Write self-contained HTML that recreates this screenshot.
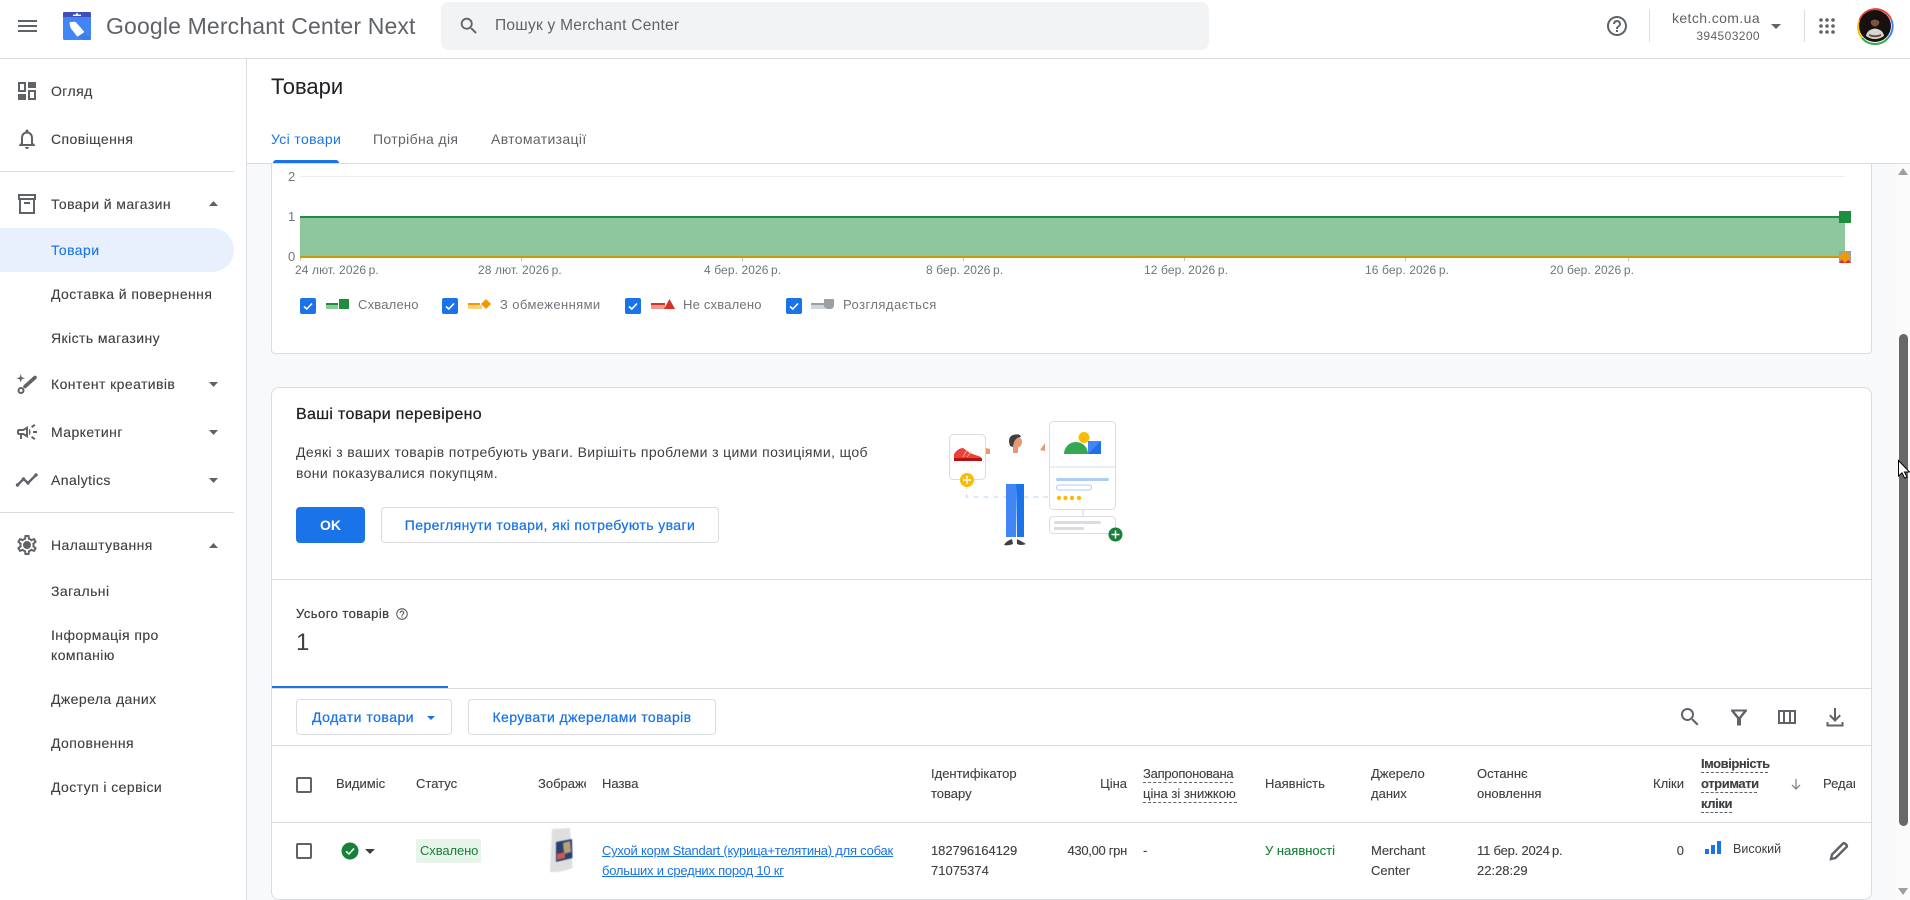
<!DOCTYPE html>
<html lang="uk"><head><meta charset="utf-8"><title>Google Merchant Center Next</title>
<style>
html,body{margin:0;padding:0;width:1910px;height:900px;overflow:hidden;background:#fff}
body{font-family:"Liberation Sans",Arial,sans-serif;font-size:14px;color:#3c4043;position:relative}
.t{position:absolute;white-space:nowrap;line-height:20px;height:20px}
.b{position:absolute;box-sizing:border-box}
.m{font-weight:400;-webkit-text-stroke:.25px currentColor}
.nav{color:#3c4043;left:51px;font-size:14px;letter-spacing:.42px;-webkit-text-stroke:.12px currentColor}
.th{font-size:13px;color:#3c4043;-webkit-text-stroke:.12px currentColor}
.ax{font-size:12px;color:#70757a;top:260px;letter-spacing:.1px}
.yl{font-size:13px;color:#70757a}
.lg{font-size:13px;color:#70757a;top:295px;letter-spacing:.3px}
.blue{color:#1a73e8}
.btn{position:absolute;box-sizing:border-box;border:1px solid #dadce0;border-radius:4px;background:#fff;color:#1a73e8;text-align:center;font-size:14px;white-space:nowrap;letter-spacing:.4px}
.dash{border-bottom:1px dashed #5f6368;position:absolute;height:0}
svg{position:absolute;overflow:visible}
.cb{position:absolute;width:16px;height:16px;box-sizing:border-box;border:2px solid #5f6368;border-radius:2px}
.lc{position:absolute;width:16px;height:16px;background:#1a73e8;border-radius:2px;top:298px}
</style></head><body>

<!-- content background -->
<div class="b" style="left:247px;top:163px;width:1663px;height:737px;background:#f8f9fa"></div>
<div class="b" style="left:1896px;top:163px;width:14px;height:737px;background:#fbfbfb"></div>

<!-- Top header -->
<div class="b" style="left:0;top:58px;width:1910px;height:1px;background:#dadce0"></div>
<div class="b" style="left:18px;top:20px;width:19px;height:2px;background:#5f6368"></div>
<div class="b" style="left:18px;top:25px;width:19px;height:2px;background:#5f6368"></div>
<div class="b" style="left:18px;top:30px;width:19px;height:2px;background:#5f6368"></div>
<svg style="left:63px;top:12px" width="28" height="28" viewBox="0 0 28 28">
<rect width="28" height="28" rx="1.500" fill="#4285f4"/>
<path d="M0 1.500A1.500 1.500 0 0 1 1.500 0H26.500A1.500 1.500 0 0 1 28 1.500V5H0Z" fill="#3f51b5"/>
<rect x="10" y="2.600" width="8" height="1.400" fill="#fff"/><rect x="13" y="1.200" width="2" height="2" fill="#fff"/>
<path d="M21 20L28 26V26.500Q28 28 26.500 28H20L14 24Z" fill="#3d7ee6"/>
<path d="M6.500 11.500Q6.300 10.300 7.800 10L12.500 9.800L21 19.500Q21.300 20.300 20.500 20.800L15.200 24.300Q14.400 24.800 13.800 24L7.600 16Z" fill="#fff"/>
</svg>
<div class="t" style="left:106px;top:14px;font-size:23px;line-height:24px;height:24px;color:#5f6368;letter-spacing:.15px">Google Merchant Center Next</div>
<div class="b" style="left:441px;top:2px;width:768px;height:48px;background:#f1f3f4;border-radius:8px"></div>
<svg style="left:458px;top:15px" width="22" height="22" viewBox="0 0 24 24"><path fill="#5f6368" d="M15.5 14h-.79l-.28-.27A6.47 6.47 0 0 0 16 9.5 6.5 6.5 0 1 0 9.5 16c1.61 0 3.09-.59 4.23-1.57l.27.28v.79l5 4.99L20.49 19l-4.99-5zm-6 0C7.01 14 5 11.99 5 9.5S7.01 5 9.5 5 14 7.01 14 9.5 11.99 14 9.5 14z"/></svg>
<div class="t" style="left:495px;top:16px;font-size:15.5px;color:#5f6368;letter-spacing:.25px">Пошук у Merchant Center</div>

<svg style="left:1605px;top:14px" width="24" height="24" viewBox="0 0 24 24"><path fill="#5f6368" d="M11 18h2v-2h-2v2zm1-16C6.48 2 2 6.48 2 12s4.48 10 10 10 10-4.48 10-10S17.52 2 12 2zm0 18c-4.41 0-8-3.59-8-8s3.59-8 8-8 8 3.59 8 8-3.59 8-8 8zm0-14c-2.21 0-4 1.79-4 4h2c0-1.1.9-2 2-2s2 .9 2 2c0 2-3 1.75-3 5h2c0-2.25 3-2.5 3-5 0-2.21-1.79-4-4-4z"/></svg>
<div class="b" style="left:1649px;top:10px;width:1px;height:32px;background:#dadce0"></div>
<div class="t" style="right:150px;top:8px;font-size:14px;color:#5f6368;letter-spacing:.4px">ketch.com.ua</div>
<div class="t" style="right:150px;top:26px;font-size:12px;color:#5f6368;letter-spacing:.4px">394503200</div>
<svg style="left:1771px;top:24px" width="10" height="6"><path d="M0 0H10L5 5Z" fill="#5f6368"/></svg>
<div class="b" style="left:1804px;top:10px;width:1px;height:32px;background:#dadce0"></div>
<svg style="left:1819px;top:18px" width="16" height="16" viewBox="0 0 16 16" fill="#5f6368">
<circle cx="2" cy="2" r="1.800"/><circle cx="8" cy="2" r="1.800"/><circle cx="14" cy="2" r="1.800"/>
<circle cx="2" cy="8" r="1.800"/><circle cx="8" cy="8" r="1.800"/><circle cx="14" cy="8" r="1.800"/>
<circle cx="2" cy="14" r="1.800"/><circle cx="8" cy="14" r="1.800"/><circle cx="14" cy="14" r="1.800"/></svg>
<svg style="left:1855px;top:6px" width="40" height="40" viewBox="0 0 40 40">
<path d="M4.500 14.500A17 17 0 0 1 36 13" fill="none" stroke="#ea4335" stroke-width="2"/>
<path d="M36 13A17 17 0 0 1 33 32" fill="none" stroke="#4285f4" stroke-width="2"/>
<path d="M33 32A17 17 0 0 1 7 32" fill="none" stroke="#34a853" stroke-width="2"/>
<path d="M7 32A17 17 0 0 1 4.500 14.500" fill="none" stroke="#fbbc04" stroke-width="2"/>
<circle cx="20" cy="20" r="16" fill="#17120f"/>
<path d="M11 30Q12 23.500 20 22.500Q28 23.500 29 30Q20 36 11 30Z" fill="#d8d6d2"/>
<circle cx="20" cy="16.500" r="4.300" fill="#7a5340"/>
<path d="M15.500 15.500Q16 11.500 20 11.500Q24 11.500 24.500 15.500Q22 13.500 20 13.500Q17 13.500 15.500 15.500Z" fill="#120d0a"/>
<path d="M16 18Q20 23 24 18L24 20Q20 23 16 20Z" fill="#1c1410"/>
<path d="M14 28Q20 30.500 26 28L26 30Q20 32.500 14 30Z" fill="#6f4d38"/>
</svg>

<!-- Sidebar -->
<div class="b" style="left:246px;top:59px;width:1px;height:841px;background:#dadce0"></div>
<svg style="left:15px;top:79px" width="24" height="24" viewBox="0 0 24 24"><path fill="#5f6368" d="M3 3h8v10H3zm2 2v6h4V5zM13 3h8v6h-8zM3 15h8v6H3zM13 11h8v10h-8zm2 2v6h4v-6z"/></svg>
<div class="t nav" style="top:81px">Огляд</div>
<svg style="left:15px;top:127px" width="24" height="24" viewBox="0 0 24 24"><path fill="#5f6368" d="M12 22c1.100 0 2-.9 2-2h-4c0 1.100.9 2 2 2zm6-6v-5c0-3.070-1.630-5.640-4.500-6.320V4c0-.83-.67-1.500-1.500-1.500s-1.500.67-1.500 1.500v.68C7.640 5.360 6 7.920 6 11v5l-2 2v1h16v-1l-2-2zm-2 1H8v-6c0-2.480 1.510-4.500 4-4.500s4 2.020 4 4.500v6z"/></svg>
<div class="t nav" style="top:129px">Сповіщення</div>
<div class="b" style="left:0;top:171px;width:234px;height:1px;background:#dadce0"></div>
<svg style="left:15px;top:192px" width="24" height="24" viewBox="0 0 24 24"><path fill="#5f6368" d="M3 2h18v6h-1v14H4V8H3zm2 2v2h14V4zm1 4v12h12V8zm3 2h6v2H9z"/></svg>
<div class="t nav" style="top:194px">Товари й магазин</div>
<svg style="left:209px;top:201px" width="9" height="5"><path d="M0 5L4.500 0L9 5Z" fill="#5f6368"/></svg>
<div class="b" style="left:0;top:228px;width:234px;height:44px;background:#e8f0fe;border-radius:0 22px 22px 0"></div>
<div class="t nav blue" style="top:240px;color:#1a73e8">Товари</div>
<div class="t nav" style="top:284px">Доставка й повернення</div>
<div class="t nav" style="top:328px">Якість магазину</div>
<svg style="left:15px;top:372px" width="24" height="24" viewBox="0 0 24 24">
<path fill="#5f6368" d="M5.700 2l1 3.300 3.300 1-3.300 1-1 3.300-1-3.300-3.300-1 3.300-1z"/>
<path d="M10 14.500L20 5.500" stroke="#5f6368" stroke-width="3.600" stroke-linecap="round"/>
<circle cx="6" cy="18.500" r="2.500" fill="none" stroke="#5f6368" stroke-width="2"/></svg>
<div class="t nav" style="top:374px">Контент креативів</div>
<svg style="left:209px;top:382px" width="9" height="5"><path d="M0 0L4.500 5L9 0Z" fill="#5f6368"/></svg>
<svg style="left:15px;top:420px" width="24" height="24" viewBox="0 0 24 24"><path fill="#5f6368" d="M18 11v2h4v-2h-4zm-2 6.610c.96.71 2.210 1.650 3.200 2.390.4-.53.8-1.070 1.200-1.600-.99-.74-2.240-1.680-3.200-2.400-.4.54-.8 1.080-1.200 1.610zM20.400 5.600c-.4-.53-.8-1.070-1.200-1.600-.99.74-2.240 1.680-3.200 2.400.4.53.8 1.070 1.200 1.600.96-.72 2.210-1.650 3.200-2.400zM4 9c-1.100 0-2 .9-2 2v2c0 1.100.9 2 2 2h1v4h2v-4h1l5 3V6L8 9H4zm5.030 1.710L11 9.530v4.940l-1.970-1.180-.48-.29H4v-2h4.550l.48-.29zM15.500 12c0-1.330-.58-2.530-1.500-3.350v6.690c.92-.81 1.500-2.010 1.500-3.340z"/></svg>
<div class="t nav" style="top:422px">Маркетинг</div>
<svg style="left:209px;top:430px" width="9" height="5"><path d="M0 0L4.500 5L9 0Z" fill="#5f6368"/></svg>
<svg style="left:15px;top:468px" width="24" height="24" viewBox="0 0 24 24"><path fill="none" stroke="#5f6368" stroke-width="2.400" d="M2.500 17L8.500 11l4.500 4 8-8"/><g fill="#5f6368"><circle cx="2.500" cy="17" r="1.700"/><circle cx="8.500" cy="11" r="1.700"/><circle cx="13" cy="15" r="1.700"/><circle cx="21" cy="7" r="1.700"/></g></svg>
<div class="t nav" style="top:470px">Analytics</div>
<svg style="left:209px;top:478px" width="9" height="5"><path d="M0 0L4.500 5L9 0Z" fill="#5f6368"/></svg>
<div class="b" style="left:0;top:512px;width:234px;height:1px;background:#dadce0"></div>
<svg style="left:15px;top:533px" width="24" height="24" viewBox="0 0 24 24"><path fill="#5f6368" d="M19.430 12.980c.04-.32.07-.64.07-.98s-.03-.66-.07-.98l2.110-1.650c.19-.15.24-.42.12-.64l-2-3.460c-.12-.22-.39-.3-.61-.22l-2.490 1c-.52-.4-1.080-.73-1.690-.98l-.38-2.650A.488.488 0 0 0 14 2h-4c-.25 0-.46.18-.49.42l-.38 2.650c-.61.25-1.170.59-1.690.98l-2.490-1c-.23-.09-.49 0-.61.22l-2 3.460c-.13.22-.07.49.12.64l2.110 1.650c-.04.32-.07.65-.07.98s.03.66.07.98l-2.110 1.650c-.19.15-.24.42-.12.64l2 3.460c.12.22.39.3.61.22l2.490-1c.52.4 1.080.73 1.690.98l.38 2.650c.03.24.24.42.49.42h4c.25 0 .46-.18.49-.42l.38-2.650c.61-.25 1.170-.59 1.690-.98l2.490 1c.23.09.49 0 .61-.22l2-3.460c.12-.22.07-.49-.12-.64l-2.110-1.650zM17.450 11.270c.04.31.05.52.05.73 0 .21-.02.43-.05.73l-.14 1.130.89.7 1.080.84-.7 1.210-1.270-.51-1.040-.42-.9.68c-.43.32-.84.56-1.250.73l-1.060.43-.16 1.130-.2 1.350h-1.400l-.19-1.350-.16-1.130-1.060-.43c-.43-.18-.83-.41-1.230-.71l-.91-.7-1.060.43-1.270.51-.7-1.210 1.080-.84.89-.7-.14-1.130c-.03-.31-.05-.54-.05-.74s.02-.43.05-.73l.14-1.130-.89-.7-1.080-.84.7-1.210 1.270.51 1.040.42.9-.68c.43-.32.84-.56 1.250-.73l1.060-.43.16-1.130.2-1.350h1.390l.19 1.350.16 1.130 1.060.43c.43.18.83.41 1.230.71l.91.7 1.060-.43 1.270-.51.7 1.210-1.070.85-.89.7.14 1.130zM12 8a4 4 0 1 0 0 8 4 4 0 0 0 0-8z"/></svg>
<div class="t nav" style="top:535px">Налаштування</div>
<svg style="left:209px;top:543px" width="9" height="5"><path d="M0 5L4.500 0L9 5Z" fill="#5f6368"/></svg>
<div class="t nav" style="top:581px">Загальні</div>
<div class="t nav" style="top:625px">Інформація про</div>
<div class="t nav" style="top:645px">компанію</div>
<div class="t nav" style="top:689px">Джерела даних</div>
<div class="t nav" style="top:733px">Доповнення</div>
<div class="t nav" style="top:777px">Доступ і сервіси</div>

<!-- Page header -->
<div class="t" style="left:271px;top:73px;font-size:22px;line-height:28px;height:28px;color:#202124">Товари</div>
<div class="t blue" style="left:271px;top:129px;letter-spacing:.35px">Усі товари</div>
<div class="t" style="left:373px;top:129px;color:#5f6368;letter-spacing:.35px">Потрібна дія</div>
<div class="t" style="left:491px;top:129px;color:#5f6368;letter-spacing:.35px">Автоматизації</div>
<div class="b" style="left:273px;top:160px;width:66px;height:3px;background:#1a73e8;border-radius:3px 3px 0 0"></div>
<div class="b" style="left:247px;top:163px;width:1663px;height:1px;background:#dadce0"></div>

<!-- Chart card -->
<div class="b" style="left:271px;top:164px;width:1601px;height:190px;background:#fff;border:1px solid #dadce0;border-top:0;border-radius:0 0 4px 4px"></div>
<div class="t yl" style="left:288px;top:167px">2</div>
<div class="t yl" style="left:288px;top:207px">1</div>
<div class="t yl" style="left:288px;top:247px">0</div>
<div class="b" style="left:300px;top:176px;width:1545px;height:1px;background:#eceef0"></div>
<div class="b" style="left:300px;top:216px;width:1545px;height:41px;background:#8ec79d"></div>
<div class="b" style="left:300px;top:216px;width:1545px;height:2px;background:#1e8e3e"></div>
<div class="b" style="left:300px;top:256px;width:1545px;height:2px;background:#c99a06"></div>
<div class="b" style="left:300px;top:258px;width:1px;height:3px;background:#bdc1c6"></div>
<div class="b" style="left:521px;top:258px;width:1px;height:3px;background:#bdc1c6"></div>
<div class="b" style="left:742px;top:258px;width:1px;height:3px;background:#bdc1c6"></div>
<div class="b" style="left:963px;top:258px;width:1px;height:3px;background:#bdc1c6"></div>
<div class="b" style="left:1184px;top:258px;width:1px;height:3px;background:#bdc1c6"></div>
<div class="b" style="left:1405px;top:258px;width:1px;height:3px;background:#bdc1c6"></div>
<div class="b" style="left:1628px;top:258px;width:1px;height:3px;background:#bdc1c6"></div>
<div class="b" style="left:1839px;top:211px;width:12px;height:12px;background:#1e8e3e"></div>
<svg style="left:1839px;top:251px" width="12" height="12"><rect width="12" height="12" fill="#9aa0a6"/><path d="M0 12L6 5L12 12Z" fill="#d93025"/><path d="M6 0L12 6L6 12L0 6Z" fill="#f29900"/></svg>
<div class="t ax" style="left:295px">24 лют. 2026&#8201;р.</div>
<div class="t ax" style="left:478px">28 лют. 2026&#8201;р.</div>
<div class="t ax" style="left:704px">4 бер. 2026&#8201;р.</div>
<div class="t ax" style="left:926px">8 бер. 2026&#8201;р.</div>
<div class="t ax" style="left:1144px">12 бер. 2026&#8201;р.</div>
<div class="t ax" style="left:1365px">16 бер. 2026&#8201;р.</div>
<div class="t ax" style="left:1550px">20 бер. 2026&#8201;р.</div>
<!-- legend -->
<div class="lc" style="left:300px"></div>
<svg style="left:300px;top:298px" width="16" height="16"><path d="M4 8.500L6.800 11L12 5.500" fill="none" stroke="#fff" stroke-width="1.600"/></svg>
<div class="b" style="left:326px;top:303px;width:12px;height:2px;background:#1e8e3e"></div>
<div class="b" style="left:326px;top:305px;width:12px;height:4px;background:#8ec79d"></div>
<div class="b" style="left:339px;top:299px;width:10px;height:10px;background:#1e8e3e"></div>
<div class="t lg" style="left:358px;letter-spacing:.2px">Схвалено</div>
<div class="lc" style="left:442px"></div>
<svg style="left:442px;top:298px" width="16" height="16"><path d="M4 8.500L6.800 11L12 5.500" fill="none" stroke="#fff" stroke-width="1.600"/></svg>
<div class="b" style="left:468px;top:303px;width:12px;height:2px;background:#f29900"></div>
<div class="b" style="left:468px;top:305px;width:14px;height:4px;background:#fad27d"></div>
<svg style="left:481px;top:299px" width="10" height="10"><path d="M5 0L10 5L5 10L0 5Z" fill="#f29900"/></svg>
<div class="t lg" style="left:500px;letter-spacing:.4px">З обмеженнями</div>
<div class="lc" style="left:625px"></div>
<svg style="left:625px;top:298px" width="16" height="16"><path d="M4 8.500L6.800 11L12 5.500" fill="none" stroke="#fff" stroke-width="1.600"/></svg>
<div class="b" style="left:651px;top:303px;width:14px;height:2px;background:#d93025"></div>
<div class="b" style="left:651px;top:305px;width:14px;height:4px;background:#ee9890"></div>
<svg style="left:664px;top:299px" width="11" height="10"><path d="M5.500 0L11 10H0Z" fill="#d93025"/></svg>
<div class="t lg" style="left:683px;letter-spacing:.2px">Не схвалено</div>
<div class="lc" style="left:786px"></div>
<svg style="left:786px;top:298px" width="16" height="16"><path d="M4 8.500L6.800 11L12 5.500" fill="none" stroke="#fff" stroke-width="1.600"/></svg>
<div class="b" style="left:811px;top:303px;width:14px;height:2px;background:#9aa0a6"></div>
<div class="b" style="left:811px;top:305px;width:14px;height:4px;background:#d2d4d7"></div>
<svg style="left:824px;top:299px" width="10" height="10"><path d="M0 0H10V6Q10 10 6 10H4Q0 10 0 6Z" fill="#9aa0a6"/></svg>
<div class="t lg" style="left:843px;letter-spacing:.45px">Розглядається</div>

<!-- Main card -->
<div class="b" style="left:271px;top:387px;width:1601px;height:513px;background:#fff;border:1px solid #dadce0;border-radius:8px"></div>
<div class="t m" style="left:296px;top:405px;font-size:16px;color:#202124;letter-spacing:.32px">Ваші товари перевірено</div>
<div class="t" style="left:296px;top:442px;font-size:14px;letter-spacing:.37px">Деякі з ваших товарів потребують уваги. Вирішіть проблеми з цими позиціями, щоб</div>
<div class="t" style="left:296px;top:463px;font-size:14px;letter-spacing:.37px">вони показувалися покупцям.</div>
<div class="b" style="left:296px;top:507px;width:69px;height:36px;background:#1a73e8;border-radius:4px;color:#fff;text-align:center;line-height:36px;font-weight:700;font-size:14px">OK</div>
<div class="btn m" style="left:381px;top:507px;width:338px;height:36px;line-height:35px">Переглянути товари, які потребують уваги</div>

<!-- illustration -->
<svg style="left:920px;top:400px" width="220" height="160" viewBox="0 0 220 160">
<path d="M46.500 84V97H125M113 97H129" fill="none" stroke="#d2e3fc" stroke-width="1.500" stroke-dasharray="5 5"/>
<path d="M163 110V117" stroke="#d2e3fc" stroke-width="1.500"/>
<rect x="29.500" y="34.500" width="36" height="45" rx="4" fill="#fff" stroke="#dadce0" stroke-width="1"/>
<path d="M34 54Q38 48 43 48L50 53L61 57V60H34Z" fill="#ea4335"/>
<path d="M34 58H62V61H34Z" fill="#b31412"/>
<path d="M43 57L47 50M47 57L51 52" stroke="#f6a69e" stroke-width="1"/>
<circle cx="47" cy="80" r="7" fill="#fbbc04"/><path d="M47 76V84M43 80H51" stroke="#fff" stroke-width="1.500"/>
<path d="M66 48L70 49V54H66Z" fill="#e59a73"/>
<path d="M120 50L125 43V51Z" fill="#e59a73"/>
<circle cx="96" cy="42" r="6" fill="#e59a73"/>
<path d="M90 46Q87 37 93 35Q100 33 101 37Q94 37 93 47Z" fill="#3c4043"/>
<path d="M93 45H98V53H93Z" fill="#e59a73"/>
<path d="M86 84H96V137H86Z" fill="#4285f4"/>
<path d="M96 84H104V137H97Z" fill="#1a73e8"/>
<path d="M84 145Q86 141 92 139L93 144Q88 146 84 145ZM97 139Q101 141 106 144Q101 146 97 144Z" fill="#3c4043"/>
<rect x="129.500" y="21.500" width="66" height="88" rx="4" fill="#fff" stroke="#dadce0" stroke-width="1"/>
<path d="M130 67H195" stroke="#dadce0" stroke-width="1"/>
<path d="M144 54A12 12 0 0 1 168 54Z" fill="#34a853"/>
<circle cx="164" cy="37.500" r="5.500" fill="#fbbc04"/>
<path d="M168 41H181V54H168Z" fill="#4285f4"/><path d="M181 41V54H168Z" fill="#1a73e8"/>
<rect x="136" y="78" width="53" height="3" rx="1.500" fill="#aecbfa"/>
<rect x="136.500" y="85" width="35" height="5" rx="2.500" fill="#fff" stroke="#aecbfa"/>
<g fill="#fbbc04"><circle cx="139" cy="98" r="2.200"/><circle cx="145.500" cy="98" r="2.200"/><circle cx="152" cy="98" r="2.200"/><circle cx="159" cy="98" r="2.200"/></g>
<rect x="129.500" y="116.500" width="66" height="17" rx="4" fill="#fff" stroke="#dadce0"/>
<rect x="134" y="121" width="47" height="3" rx="1.500" fill="#dadce0"/>
<rect x="134" y="127" width="30" height="3" rx="1.500" fill="#dadce0"/>
<circle cx="195.500" cy="134.500" r="7" fill="#188038"/><path d="M195.500 130.500V138.500M191.500 134.500H199.500" stroke="#fff" stroke-width="1.500"/>
</svg>

<div class="b" style="left:272px;top:579px;width:1599px;height:1px;background:#dadce0"></div>
<div class="t m" style="left:296px;top:604px;font-size:13px;letter-spacing:.45px">Усього товарів</div>
<svg style="left:395px;top:607px" width="14" height="14" viewBox="0 0 24 24"><path fill="#5f6368" d="M11 18h2v-2h-2v2zm1-16C6.480 2 2 6.480 2 12s4.480 10 10 10 10-4.480 10-10S17.520 2 12 2zm0 18c-4.410 0-8-3.590-8-8s3.590-8 8-8 8 3.590 8 8-3.590 8-8 8zm0-14c-2.210 0-4 1.790-4 4h2c0-1.100.900-2 2-2s2 .900 2 2c0 2-3 1.750-3 5h2c0-2.250 3-2.500 3-5 0-2.210-1.790-4-4-4z"/></svg>
<div class="t" style="left:296px;top:629px;font-size:24px;line-height:28px;height:28px;color:#3c4043">1</div>
<div class="b" style="left:272px;top:688px;width:1599px;height:1px;background:#dadce0"></div>
<div class="b" style="left:272px;top:686px;width:176px;height:2px;background:#1a73e8"></div>
<div class="btn m" style="left:296px;top:699px;width:156px;height:36px;line-height:35px;text-align:left;padding-left:15px;letter-spacing:.5px">Додати товари</div>
<svg style="left:427px;top:716px" width="8" height="4"><path d="M0 0H8L4 4Z" fill="#1a73e8"/></svg>
<div class="btn m" style="left:468px;top:699px;width:248px;height:36px;line-height:35px">Керувати джерелами товарів</div>
<svg style="left:1678px;top:705px" width="24" height="24" viewBox="0 0 24 24"><path fill="#5f6368" d="M15.500 14h-.790l-.280-.270A6.470 6.470 0 0 0 16 9.500 6.500 6.500 0 1 0 9.500 16c1.610 0 3.090-.590 4.230-1.570l.270.280v.790l5 4.990L20.490 19l-4.990-5zm-6 0C7.010 14 5 11.990 5 9.500S7.010 5 9.500 5 14 7.010 14 9.500 11.990 14 9.500 14z"/></svg>
<svg style="left:1727px;top:705px" width="24" height="24" viewBox="0 0 24 24"><path fill="#5f6368" d="M4 4.500h16v1.500L14 13.500v7h-4v-7L4 6zm3.500 2l4.500 5.500L16.500 6.500z"/></svg>
<svg style="left:1775px;top:705px" width="24" height="24" viewBox="0 0 24 24"><path fill="#5f6368" d="M3 5h18v14H3zm2 2v10h3V7zm5 0v10h4V7zm6 0v10h3V7z"/></svg>
<svg style="left:1823px;top:705px" width="24" height="24" viewBox="0 0 24 24"><path fill="#5f6368" d="M11 3h2v10l3.500-3.500 1.400 1.400L12 17l-5.900-6.100 1.400-1.400L11 13zM3.500 17h2v2.500h13V17h2v4.500h-17z"/></svg>

<!-- Table -->
<div class="b" style="left:272px;top:745px;width:1599px;height:1px;background:#dadce0"></div>
<div class="b" style="left:272px;top:822px;width:1599px;height:1px;background:#dadce0"></div>
<div class="cb" style="left:296px;top:777px"></div>
<div class="t th" style="left:336px;top:774px">Видиміс</div>
<div class="t th" style="left:416px;top:774px">Статус</div>
<div class="t th" style="left:538px;top:774px;width:48px;overflow:hidden">Зображення</div>
<div class="t th" style="left:602px;top:774px">Назва</div>
<div class="t th" style="left:931px;top:764px">Ідентифікатор</div>
<div class="t th" style="left:931px;top:784px">товару</div>
<div class="t th" style="right:783px;top:774px">Ціна</div>
<div class="t th" style="left:1143px;top:764px;letter-spacing:-.25px">Запропонована</div>
<div class="dash" style="left:1143px;top:782px;width:90px"></div>
<div class="t th" style="left:1143px;top:784px">ціна зі знижкою</div>
<div class="dash" style="left:1143px;top:802px;width:94px"></div>
<div class="t th" style="left:1265px;top:774px">Наявність</div>
<div class="t th" style="left:1371px;top:764px">Джерело</div>
<div class="t th" style="left:1371px;top:784px">даних</div>
<div class="t th" style="left:1477px;top:764px">Останнє</div>
<div class="t th" style="left:1477px;top:784px">оновлення</div>
<div class="t th" style="right:226px;top:774px">Кліки</div>
<div class="t th" style="left:1701px;top:754px;font-weight:700;letter-spacing:-.45px">Імовірність</div>
<div class="dash" style="left:1701px;top:772px;width:67px"></div>
<div class="t th" style="left:1701px;top:774px;font-weight:700;letter-spacing:-.4px">отримати</div>
<div class="dash" style="left:1701px;top:792px;width:56px"></div>
<div class="t th" style="left:1701px;top:794px;font-weight:700;letter-spacing:-.4px">кліки</div>
<div class="dash" style="left:1701px;top:812px;width:31px"></div>
<svg style="left:1791px;top:779px" width="10" height="11" viewBox="0 0 10 11"><path d="M5 0V10M1 6L5 10L9 6" fill="none" stroke="#80868b" stroke-width="1.300"/></svg>
<div class="t th" style="left:1823px;top:774px;width:32px;overflow:hidden">Редагувати</div>

<div class="cb" style="left:296px;top:843px"></div>
<svg style="left:341px;top:842px" width="18" height="18"><circle cx="9" cy="9" r="8.500" fill="#188038"/><path d="M5 9.300L8 12L13 6.500" fill="none" stroke="#fff" stroke-width="1.500"/></svg>
<svg style="left:365px;top:849px" width="10" height="5"><path d="M0 0H10L5 5Z" fill="#3c4043"/></svg>
<div class="b" style="left:416px;top:839px;width:65px;height:24px;background:#e6f4ea;border-radius:2px"></div>
<div class="t" style="left:420px;top:841px;font-size:13px;color:#188038;letter-spacing:-.1px">Схвалено</div>
<svg style="left:546px;top:826px;filter:blur(.6px)" width="30" height="50" viewBox="0 0 30 50">
<path d="M6 3L24 2L26.500 42Q14 47 4 46Z" fill="#dcdee0"/>
<path d="M10 16L26 13L26.500 32L10 36Z" fill="#2c4070"/>
<path d="M17 17L24 15L25 26L18 28Z" fill="#b5a27c"/><path d="M11 28L19 26L19 32L11 34Z" fill="#d0584c"/>
</svg>
<div class="t" style="left:602px;top:841px;font-size:13px;color:#1a73e8;text-decoration:underline;letter-spacing:-.23px">Сухой корм Standart (курица+телятина) для собак</div>
<div class="t" style="left:602px;top:861px;font-size:13px;color:#1a73e8;text-decoration:underline;letter-spacing:-.23px">больших и средних пород 10 кг</div>
<div class="t th" style="left:931px;top:841px;letter-spacing:-.05px">182796164129</div>
<div class="t th" style="left:931px;top:861px">71075374</div>
<div class="t th" style="right:783px;top:841px;letter-spacing:-.3px">430,00 грн</div>
<div class="t th" style="left:1143px;top:841px">-</div>
<div class="t th" style="left:1265px;top:841px;color:#188038">У наявності</div>
<div class="t th" style="left:1371px;top:841px">Merchant</div>
<div class="t th" style="left:1371px;top:861px">Center</div>
<div class="t th" style="left:1477px;top:841px;letter-spacing:-.2px">11 бер. 2024&#8201;р.</div>
<div class="t th" style="left:1477px;top:861px">22:28:29</div>
<div class="t th" style="right:226px;top:841px">0</div>
<div class="b" style="left:1705px;top:849px;width:4px;height:5px;background:#1a73e8"></div>
<div class="b" style="left:1711px;top:845px;width:4px;height:9px;background:#1a73e8"></div>
<div class="b" style="left:1717px;top:841px;width:4px;height:13px;background:#1a73e8"></div>
<div class="t" style="left:1733px;top:839px;font-size:12.500px">Високий</div>
<svg style="left:1829px;top:841px" width="20" height="20" viewBox="0 0 20 20"><path fill="none" stroke="#5f6368" stroke-width="2.400" d="M2 18L3 13.500L14 2.500Q15 1.500 16.500 3L17 3.500Q18.500 5 17.500 6L6.500 17Z"/></svg>

<!-- Scrollbar -->
<svg style="left:1898px;top:168px" width="10" height="8"><path d="M0 7L5 0L10 7Z" fill="#9e9e9e"/></svg>
<div class="b" style="left:1899px;top:334px;width:9px;height:492px;background:#686868;border-radius:5px"></div>
<svg style="left:1898px;top:888px" width="10" height="8"><path d="M0 0H10L5 7Z" fill="#9e9e9e"/></svg>
<svg style="left:1898px;top:460px" width="13" height="19" viewBox="0 0 13 19"><path d="M0.500 0.500V16L4 12.800L6.500 18L9 17L6.500 12H11.500Z" fill="#fff" stroke="#000" stroke-width="1"/></svg>
</body></html>
